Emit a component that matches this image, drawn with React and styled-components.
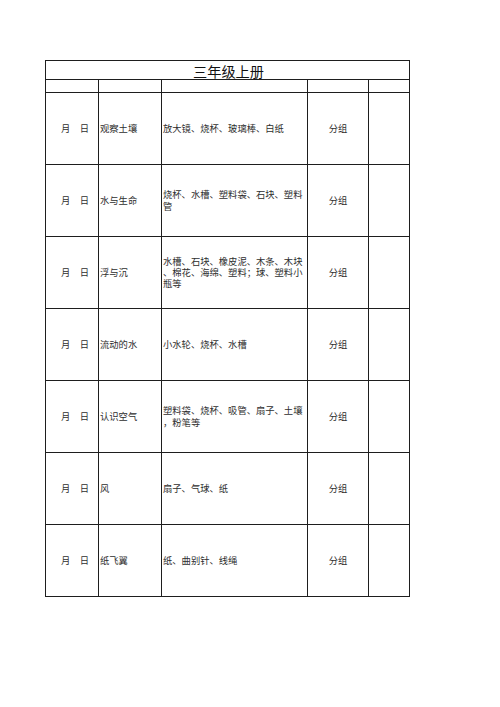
import React from "react";
import styled, { createGlobalStyle } from "styled-components";

const GlobalStyle = createGlobalStyle`
  html, body {
    margin: 0;
    padding: 0;
    background: #ffffff;
  }
  body {
    font-family: "Noto Sans CJK SC", "Noto Sans", sans-serif;
    color: #2a2a2a;
  }
`;

const Page = styled.div`
  width: 500px;
  height: 707px;
  padding: 60px 0 0 45px;
  box-sizing: border-box;
`;

const Sheet = styled.div`
  display: grid;
  width: 365px;
  box-sizing: border-box;
  grid-template-columns: 52px 62px 145px 60px 40px;
  grid-template-rows: 18px 12px repeat(7, 71px);
  gap: 1px;
  padding: 1px;
  background: #1e1e1e;
`;

const Cell = styled.div`
  background: #ffffff;
  display: flex;
  align-items: center;
  justify-content: ${(p) =>
    p.$align === "right" ? "flex-end" : p.$align === "center" ? "center" : "flex-start"};
  padding: ${(p) => p.$pad || "0"};
  font-size: 9.3px;
  line-height: 11.3px;
  color: #2e2e2e;
  overflow: hidden;
  white-space: nowrap;
`;

const TitleCell = styled.div`
  grid-column: 1 / -1;
  background: #ffffff;
  display: flex;
  align-items: flex-end;
  justify-content: center;
  font-size: 14.2px;
  line-height: 16px;
  color: #111111;
  padding-left: 2px;
`;

const Lines = styled.div`
  display: flex;
  flex-direction: column;
`;

const rows = [
  { topic: "观察土壤", materials: ["放大镜、烧杯、玻璃棒、白纸"] },
  { topic: "水与生命", materials: ["烧杯、水槽、塑料袋、石块、塑料", "管"] },
  {
    topic: "浮与沉",
    materials: ["水槽、石块、橡皮泥、木条、木块", "、棉花、海绵、塑料；球、塑料小", "瓶等"],
  },
  { topic: "流动的水", materials: ["小水轮、烧杯、水槽"] },
  { topic: "认识空气", materials: ["塑料袋、烧杯、吸管、扇子、土壤", "，粉笔等"] },
  { topic: "风", materials: ["扇子、气球、纸"] },
  { topic: "纸飞翼", materials: ["纸、曲别针、线绳"] },
];

export default function App() {
  return (
    <>
      <GlobalStyle />
      <Page>
        <Sheet>
          <TitleCell>三年级上册</TitleCell>
          <Cell />
          <Cell />
          <Cell />
          <Cell />
          <Cell />
          {rows.map((r) => (
            <React.Fragment key={r.topic}>
              <Cell $align="right" $pad="0 9px 0 0">月　日</Cell>
              <Cell $pad="0 0 0 1px">{r.topic}</Cell>
              <Cell $pad="0 0 0 1px">
                <Lines>
                  {r.materials.map((m, i) => (
                    <span key={i}>{m}</span>
                  ))}
                </Lines>
              </Cell>
              <Cell $align="center">分组</Cell>
              <Cell />
            </React.Fragment>
          ))}
        </Sheet>
      </Page>
    </>
  );
}
